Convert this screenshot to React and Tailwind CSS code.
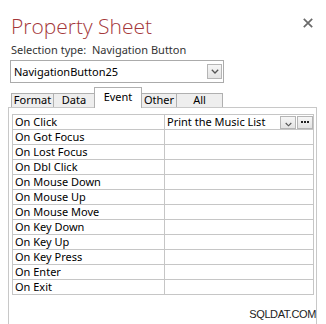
const events = [
  'On Click',
  'On Got Focus',
  'On Lost Focus',
  'On Dbl Click',
  'On Mouse Down',
  'On Mouse Up',
  'On Mouse Move',
  'On Key Down',
  'On Key Up',
  'On Key Press',
  'On Enter',
  'On Exit',
]

const tabs = [
  { label: 'Format', width: 'w-[43px]' },
  { label: 'Data', width: 'w-[42px]' },
  { label: 'Event', width: 'w-[48px]', active: true },
  { label: 'Other', width: 'w-[36px]' },
  { label: 'All', width: 'w-[47px]' },
]

function Chevron({ className }) {
  return (
    <svg viewBox="0 0 8 5" className={className}>
      <polyline points="0.8,0.8 4,4 7.2,0.8" fill="none" stroke="#555" strokeWidth="1.3" />
    </svg>
  )
}

export default function App() {
  return (
    <div className="relative flex h-[324px] w-[326px] flex-col overflow-hidden bg-white font-['Noto_Sans',sans-serif] text-black">
      {/* header */}
      <div className="px-[10px]">
        <div className="flex items-start justify-between pt-[12px]">
          <h1 className="pl-[1px] font-['Open_Sans',sans-serif] text-[21px] font-light leading-[28px] text-[#a4373a]">
            Property Sheet
          </h1>
          <svg viewBox="0 0 10 10" className="mr-[3px] mt-[6px] h-[10px] w-[10px]">
            <path d="M0.8 0.8 L9.2 9.2 M9.2 0.8 L0.8 9.2" stroke="#6a6a6a" strokeWidth="1.7" />
          </svg>
        </div>
        <p className="mt-[2px] pl-[1px] text-[11px] leading-[15px] text-[#333]">
          Selection type:{'\u00a0 '}Navigation Button
        </p>
        <div className="mt-[3px] flex h-[23px] w-[214px] items-center justify-between border border-[#ababab] pl-[3px] pr-[1px]">
          <span className="text-[11px] leading-[15px]">NavigationButton25</span>
          <div className="flex h-[15px] w-[15px] items-center justify-center border border-[#b5b5b5] bg-gradient-to-b from-[#f6f6f6] to-[#e3e3e3]">
            <Chevron className="h-[5px] w-[8px]" />
          </div>
        </div>
      </div>

      {/* tabs + panel */}
      <div className="ml-[8px] flex w-[309px] flex-1 flex-col">
        <div className="mt-[4px] flex items-end pl-[3px]">
          {tabs.map((t, i) => (
            <div
              key={t.label}
              className={
                (i > 0 ? '-ml-px ' : '') +
                t.width +
                (t.active
                  ? ' relative z-10 -mb-px flex h-[21px] justify-center border-l border-r border-t border-[#b0b0b0] bg-white pt-[3px]'
                  : ' flex h-[14px] justify-center border-l border-r border-t border-[#b0b0b0] bg-[#eeeeee]')
              }
            >
              <span className="text-[11px] leading-[12px]">{t.label}</span>
            </div>
          ))}
        </div>

        <div className="flex-1 border-l border-r border-t border-[#c8c8c8]">
          <div className="ml-[3px] mt-[6px] w-[302px] border-l border-r border-t border-[#c6c6c6]">
            {events.map((name, i) => (
              <div key={name} className="flex h-[15px] border-b border-[#c6c6c6]">
                <div className="w-[152px] border-r border-[#c6c6c6] pl-[2px] text-[11px] leading-[14px]">
                  {name}
                </div>
                <div className="flex flex-1 items-center justify-between pl-[2px]">
                  {i === 0 && (
                    <>
                      <span className="text-[11px] leading-[14px]">Print the Music List</span>
                      <div className="flex gap-[1px]">
                        <div className="flex h-[13px] w-[16px] items-end justify-center border border-[#b5b5b5] bg-gradient-to-b from-[#f6f6f6] to-[#e3e3e3] pb-[1px]">
                          <Chevron className="h-[5px] w-[7px]" />
                        </div>
                        <div className="flex h-[13px] w-[16px] items-center justify-center gap-[1px] border border-[#b5b5b5] bg-gradient-to-b from-[#f6f6f6] to-[#e3e3e3]">
                          <span className="h-[2px] w-[2px] bg-[#222]" />
                          <span className="h-[2px] w-[2px] bg-[#222]" />
                          <span className="h-[2px] w-[2px] bg-[#222]" />
                        </div>
                      </div>
                    </>
                  )}
                </div>
              </div>
            ))}
          </div>
        </div>
      </div>

      {/* watermark */}
      <span className="absolute bottom-[4px] right-[10px] font-['Liberation_Sans',Arial,sans-serif] text-[11px] leading-[12px] tracking-[-0.4px] text-[#222]">
        SQLDAT.COM
      </span>
    </div>
  )
}
